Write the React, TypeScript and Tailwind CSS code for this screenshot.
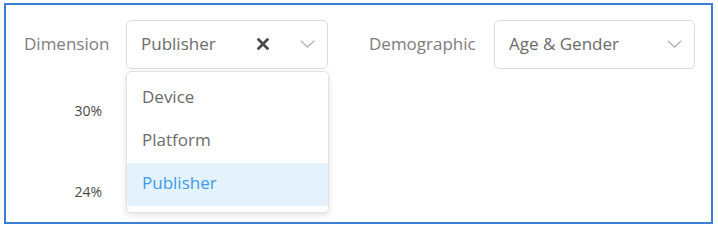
const font = { fontFamily: "'Open Sans', Lato, sans-serif" };

const options = ["Device", "Platform", "Publisher"];

const Chevron = () => (
  <svg width="15" height="8" viewBox="0 0 15 8" fill="none" className="shrink-0">
    <polyline points="0.7,0.7 7.5,7 14.3,0.7" stroke="#b3b3b3" strokeWidth="1.3" />
  </svg>
);

const Clear = () => (
  <svg width="12" height="12" viewBox="0 0 12 12" className="mr-[31px] shrink-0">
    <path d="M1.5 1.5 L10.5 10.5 M10.5 1.5 L1.5 10.5" stroke="#4a4a4a" strokeWidth="2.8" strokeLinecap="round" />
  </svg>
);

const Select = ({
  value,
  clearable,
  open,
  width,
}: {
  value: string;
  clearable?: boolean;
  open?: boolean;
  width: string;
}) => (
  <div className={`relative shrink-0 ${width}`}>
    <div className="flex h-[49px] items-center rounded-[5px] border border-[#dcdcdc] bg-white pb-[2px] pl-[14px] pr-[12px]">
      <span className="flex-1 whitespace-nowrap text-[17px] text-[#6b6b6b]">{value}</span>
      {clearable && <Clear />}
      <Chevron />
    </div>
    {open && (
      <div className="absolute left-0 top-[51px] z-10 w-[203px] rounded-[5px] border border-[#e2e2e2] bg-white pb-[6px] pt-[5px] shadow-[0_2px_6px_rgba(0,0,0,0.12)]">
        {options.map((o) => (
          <div
            key={o}
            className={`flex h-[43px] items-center pb-[3px] pl-[15px] text-[17px] ${
              o === value ? "bg-[#e3f2fc] text-[#3d9be9]" : "text-[#6b6b6b]"
            }`}
          >
            {o}
          </div>
        ))}
      </div>
    )}
  </div>
);

export default function App() {
  return (
    <div className="bg-white pl-[4px] pt-[3px]" style={font}>
      <div className="h-[221px] w-[709px] border-2 border-[#3b80d6] pl-[18px] pt-[15px]">
        <div className="flex items-center">
          <span className="w-[102px] shrink-0 whitespace-nowrap pb-[2px] text-[17px] text-[#7d7d7d]">Dimension</span>
          <Select value="Publisher" clearable open width="w-[202px]" />
          <span className="ml-[41px] w-[125px] shrink-0 whitespace-nowrap pb-[2px] text-[17px] text-[#7d7d7d]">Demographic</span>
          <Select value="Age & Gender" width="w-[201px]" />
        </div>
        <div className="mt-[31px] flex w-[78px] flex-col items-end gap-[60px] text-[14px] text-[#4a4a4a]">
          <span>30%</span>
          <span>24%</span>
        </div>
      </div>
    </div>
  );
}
